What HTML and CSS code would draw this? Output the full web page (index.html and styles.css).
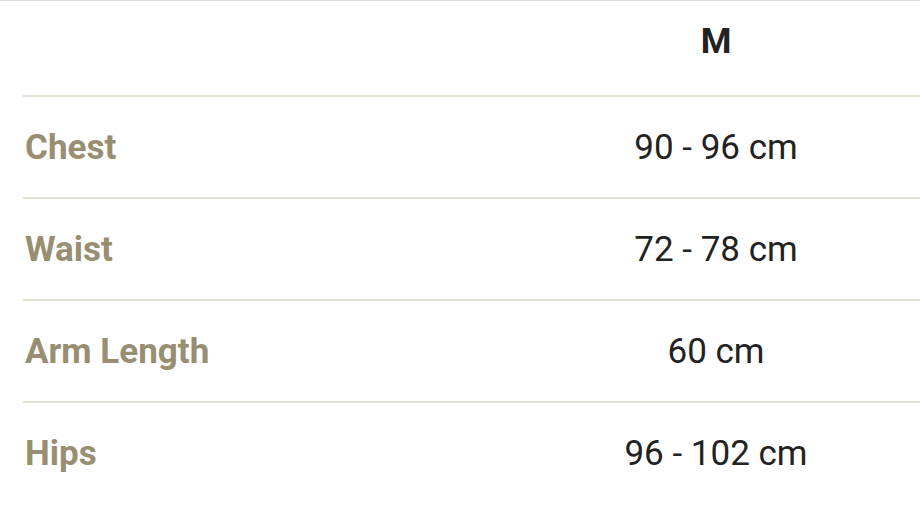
FILE: index.html
```html
<!DOCTYPE html>
<html>
<head>
<meta charset="utf-8">
<link rel="stylesheet" href="styles.css">
</head>
<body>
<div class="sheet">
  <div class="table">
    <div class="row head">
      <div class="label"></div>
      <div class="value size">M</div>
    </div>
    <div class="row">
      <div class="label">Chest</div>
      <div class="value">90 - 96 cm</div>
    </div>
    <div class="row">
      <div class="label">Waist</div>
      <div class="value">72 - 78 cm</div>
    </div>
    <div class="row">
      <div class="label">Arm Length</div>
      <div class="value">60 cm</div>
    </div>
    <div class="row last">
      <div class="label">Hips</div>
      <div class="value">96 - 102 cm</div>
    </div>
  </div>
</div>
</body>
</html>
```

FILE: styles.css
```css
html, body {
  margin: 0;
  padding: 0;
  background: #ffffff;
}
body {
  width: 920px;
  height: 520px;
  overflow: hidden;
  font-family: Roboto, "Liberation Sans", sans-serif;
}
.sheet {
  border-top: 1px solid #d9d9d9;
  padding-left: 23px;
}
.table {
  display: flex;
  flex-direction: column;
}
.row {
  display: grid;
  grid-template-columns: 489px 408px;
  align-items: center;
  height: 100px;
  border-bottom: 2px solid #e3e0d4;
}
.row.head {
  height: 80px;
  padding-bottom: 14px;
}
.row.last {
  border-bottom: none;
}
.label {
  font-size: 35px;
  font-weight: 700;
  color: #988e72;
  padding-left: 2px;
}
.value {
  text-align: center;
  font-size: 35px;
  color: #222222;
}
.value.size {
  font-weight: 700;
}
```
